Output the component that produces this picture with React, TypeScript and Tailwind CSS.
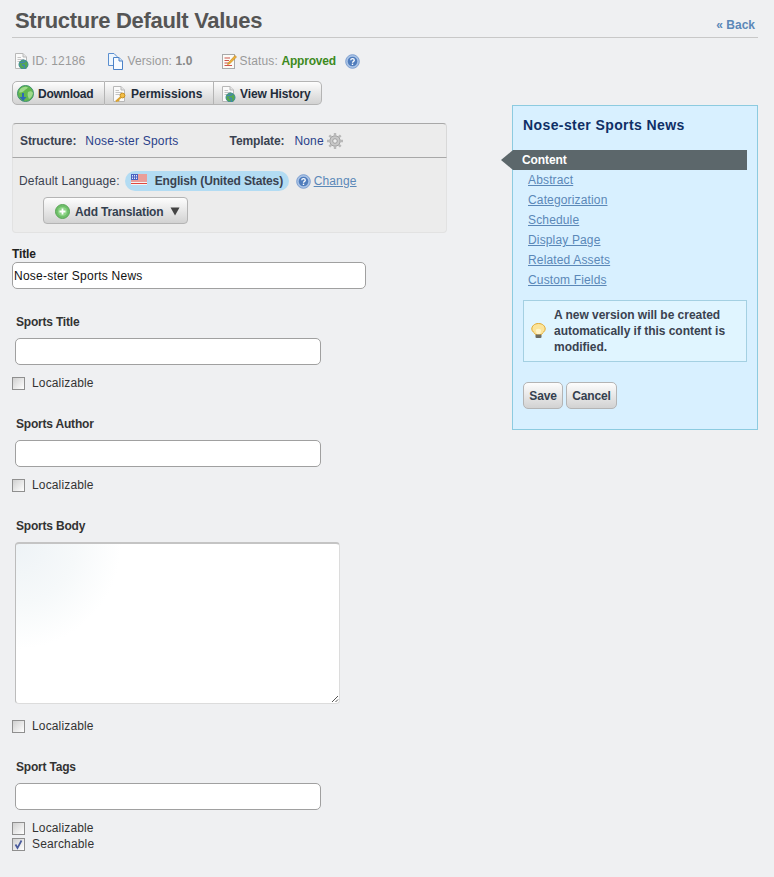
import React from "react";

const Doc = ({ globe = false, keyIcon = false }: { globe?: boolean; keyIcon?: boolean }) => (
  <svg width="16" height="16" viewBox="0 0 16 16" className="shrink-0">
    <path d="M2.500 .5H10L13.500 4V15.500H2.500Z" fill="#fafafa" stroke="#b8b8b8" />
    <path d="M10 .5V4H13.500" fill="#e4e4e4" stroke="#b8b8b8" />
    <path d="M4.500 4.500H8M4.500 6.500H11M4.500 8.500H9" stroke="#c4c4c4" />
    {globe && (
      <>
        <circle cx="10.500" cy="11.500" r="4.500" fill="#55a850" stroke="#3a8a98" />
        <path d="M7.500 10C9.500 8.500 11 9.500 12.500 8.500M9 12C11 11.500 12.500 12.500 11 15.500" stroke="#3f7fc4" strokeWidth="1.300" fill="none" />
      </>
    )}
    {keyIcon && (
      <>
        <circle cx="11.500" cy="9.500" r="2.400" fill="#f2bd45" stroke="#c78f22" />
        <path d="M10 11L5 15.500M6.500 13.500L8 15" stroke="#dba32f" strokeWidth="2" fill="none" />
      </>
    )}
  </svg>
);

const Copies = () => (
  <svg width="17" height="17" viewBox="0 0 17 17" className="shrink-0">
    <path d="M1.500 .5H7L10 3.500V12.500H1.500Z" fill="#eef6fd" stroke="#5b8fd0" />
    <path d="M6.500 4.500H12L15.500 8V16.500H6.500Z" fill="#f7fbff" stroke="#4b82c8" />
    <path d="M12 4.500V8H15.500" fill="#cfe2f6" stroke="#4b82c8" />
  </svg>
);

const StatusIcon = () => (
  <svg width="16" height="16" viewBox="0 0 16 16" className="shrink-0">
    <rect x="1.500" y="1.500" width="12" height="14" fill="#fbfbf7" stroke="#a9a9a9" />
    <path d="M3.500 5H9M3.500 7.500H8M3.500 10H7M3.500 12.500H11" stroke="#d0554a" strokeWidth="1.100" />
    <path d="M7 10L14 2.500L15.500 4L8.500 11L6.500 11.500Z" fill="#f0b035" stroke="#b97f1f" strokeWidth=".6" />
  </svg>
);

const Help = () => (
  <svg width="15" height="15" viewBox="0 0 15 15" className="shrink-0">
    <circle cx="7.500" cy="7.500" r="6.800" fill="#a9c3e6" stroke="#7d9fd0" />
    <circle cx="7.500" cy="7.500" r="4.800" fill="#4f7cbc" />
    <path d="M5.700 6.200C5.800 4.200 9.300 4.200 9.300 6.200C9.300 7.400 7.500 7.300 7.500 8.700" stroke="#fff" strokeWidth="1.300" fill="none" />
    <rect x="6.800" y="9.600" width="1.400" height="1.400" fill="#fff" />
  </svg>
);

const GlobeDown = () => (
  <svg width="17" height="17" viewBox="0 0 17 17" className="shrink-0">
    <circle cx="8.500" cy="8.500" r="8" fill="#62b84e" stroke="#3e8f6f" />
    <path d="M3 4.500C5 2 9 1 11 2.500C10 4.500 8 4 7 6C5.500 7 4 7.500 2 7.500ZM11 7C13 5.500 15 6 16 8C15.500 11 14 13 12 14C11.500 12 10 11 11 7Z" fill="#9fd98b" />
    <path d="M5 8V12H2.500L6 16L9.500 12H7V8Z" fill="#2f68b8" />
  </svg>
);

const Gear = () => (
  <svg width="16" height="16" viewBox="0 0 16 16" className="shrink-0">
    <circle cx="8" cy="8" r="5.200" fill="#c8c8c8" stroke="#a0a0a0" />
    <g stroke="#b8b8b8" strokeWidth="2.400">
      <path d="M8 0V3M8 13V16M0 8H3M13 8H16M2.300 2.300L4.400 4.400M11.600 11.600L13.700 13.700M13.700 2.300L11.600 4.400M4.400 11.600L2.300 13.700" />
    </g>
    <circle cx="8" cy="8" r="2.300" fill="#ececec" stroke="#a0a0a0" />
  </svg>
);

const Flag = () => (
  <svg width="16" height="11" viewBox="0 0 16 11" className="shrink-0">
    <rect width="16" height="11" fill="#f4f4f4" />
    <path d="M0 1H16M0 3H16M0 5H16M0 7H16M0 9.500H16" stroke="#e0493f" strokeWidth="1.100" />
    <rect width="7" height="6" fill="#4a62c0" />
    <path d="M1 1.500H6M1 3H6M1 4.500H6" stroke="#dfe6fb" strokeDasharray="1 1" />
  </svg>
);

const PlusCircle = () => (
  <svg width="15" height="15" viewBox="0 0 15 15" className="shrink-0">
    <circle cx="7.500" cy="7.500" r="7" fill="#6fc06a" stroke="#5aa456" />
    <circle cx="7.500" cy="7.500" r="4.600" fill="#8ed487" />
    <path d="M7.500 4.500V10.500M4.500 7.500H10.500" stroke="#fff" strokeWidth="1.800" />
  </svg>
);

const Bulb = () => (
  <svg width="15" height="16" viewBox="0 0 15 16" className="shrink-0">
    <path d="M7.500 .5C3.500 .5 .8 3 .8 6C.8 8.500 3.500 9.500 4.500 11.500H10.500C11.500 9.500 14.200 8.500 14.200 6C14.200 3 11.500 .5 7.500 .5Z" fill="#fbe49a" stroke="#e3a92f" />
    <path d="M4.800 8C4 5 10.500 5 10 8L9 11.500H6Z" fill="#fff4c9" />
    <rect x="4.500" y="11.500" width="6" height="3.500" rx="1" fill="#6c6c62" />
  </svg>
);

const Check = ({ checked = false, label }: { checked?: boolean; label: string }) => (
  <label className="flex items-center h-[16px] text-[12px] text-[#333]">
    <span className="w-[13px] h-[13px] border border-[#8f8f8f] bg-gradient-to-br from-[#d0d0d0] to-white flex items-center justify-center">
      {checked && (
        <svg width="11" height="11" viewBox="0 0 11 11">
          <path d="M2.500 5.500L4.500 9L8.500 1.500" stroke="#4a5b9c" strokeWidth="1.700" fill="none" />
        </svg>
      )}
    </span>
    <span className="ml-[7px]">{label}</span>
  </label>
);

const btn = "bg-gradient-to-b from-[#fdfdfd] to-[#d2d2d2] border border-[#b4b4b4] font-bold text-[12px] tracking-[-0.15px] text-[#34404f]";

const Field = ({ label, mt }: { label: string; mt: string }) => (
  <div className={mt}>
    <div className="ml-[4px] h-[16px] leading-[16px] font-bold text-[12px] tracking-[-0.2px] text-[#333]">{label}</div>
    <div className="ml-[3px] mt-[8px] w-[306px] h-[27px] bg-white border border-[#a0a0a0] rounded-[5px]" />
  </div>
);

export default function App() {
  return (
    <div
      className="min-h-[877px] bg-[#eff0f2] pl-[12px] pr-[16px] text-[12px] tracking-[0.15px] text-[#333]"
      style={{ fontFamily: '"Liberation Sans", Arial, sans-serif' }}
    >
      <header className="flex items-start justify-between h-[38px] border-b border-[#c8c8c8]">
        <h1 className="ml-[3px] mt-[8px] text-[22px] font-bold tracking-[-0.3px] text-[#555555] leading-[26px]">Structure Default Values</h1>
        <a className="mt-[17px] mr-[3px] font-bold text-[12px] leading-[16px] tracking-[0px] text-[#5b88b8]">« Back</a>
      </header>

      <div className="flex items-start">
        <main className="w-[435px]">
          <div className="flex items-center h-[22px] mt-[12px] text-[#9a9a9a]">
            <span className="ml-[1px]"><Doc globe /></span>
            <span className="ml-[3px]">ID: 12186</span>
            <span className="ml-[22px]"><Copies /></span>
            <span className="ml-[3px]">Version: <b className="text-[#888]">1.0</b></span>
            <span className="ml-[28px]"><StatusIcon /></span>
            <span className="ml-[3px]">Status: <b className="tracking-[-0.2px] text-[#3d8a1e]">Approved</b></span>
            <span className="ml-[9px] mt-[1px]"><Help /></span>
          </div>

          <div className="flex h-[24px] mt-[9px]">
            <button className={`${btn} w-[93px] rounded-l-[5px] flex items-center pl-[4px] pt-[1px]`}>
              <GlobeDown /><span className="ml-[4px] tracking-[-0.25px] text-[#222c3a]">Download</span>
            </button>
            <button className={`${btn} w-[109px] border-l-0 flex items-center pl-[6px] pt-[1px]`}>
              <Doc keyIcon /><span className="ml-[4px] tracking-[0px] text-[#222c3a]">Permissions</span>
            </button>
            <button className={`${btn} w-[108px] border-l-0 rounded-r-[5px] flex items-center pl-[6px] pt-[1px]`}>
              <Doc globe /><span className="ml-[4px] tracking-[-0.1px] text-[#222c3a]">View History</span>
            </button>
          </div>

          <div className="mt-[18px] h-[35px] flex items-center bg-[#ececec] border border-[#d8d8d8] border-t-[#a8a8a8] border-b-[#a8a8a8] rounded-t-[4px] pl-[7px]">
            <b className="tracking-[-0.1px] text-[#3a4250]">Structure:</b>
            <span className="ml-[9px] tracking-[0.2px] text-[#2a3f8a]">Nose-ster Sports</span>
            <b className="ml-[51px] tracking-[-0.1px] text-[#3a4250]">Template:</b>
            <span className="ml-[10px] text-[#2a3f8a]">None</span>
            <span className="ml-[3px]"><Gear /></span>
          </div>

          <div className="h-[75px] bg-[#ececec] border border-t-0 border-[#e2e2e2] rounded-b-[4px] pl-[6px] pt-[13px]">
            <div className="flex items-center h-[20px]">
              <span className="font-normal text-[#3a4250]">Default Language:</span>
              <span className="ml-[5px] w-[164px] h-[20px] bg-[#b3dcf3] rounded-[10px] flex items-center pl-[6px]">
                <span className="-mt-[3px]"><Flag /></span>
                <b className="ml-[8px] tracking-[-0.13px] text-[#3a4250]">English (United States)</b>
              </span>
              <span className="ml-[7px] mt-[1px]"><Help /></span>
              <a className="ml-[3px] underline text-[#5b88b8]">Change</a>
            </div>
            <button className={`${btn} mt-[6px] ml-[24px] w-[145px] h-[27px] rounded-[4px] flex items-center pl-[11px] pt-[2px] text-[#3a4250]`}>
              <PlusCircle />
              <span className="ml-[5px] tracking-[-0.15px]">Add Translation</span>
              <svg width="10" height="9" viewBox="0 0 10 9" className="ml-[7px]"><path d="M.5 .5H9.500L5 8.500Z" fill="#444" /></svg>
            </button>
          </div>

          <div className="mt-[13px] h-[16px] leading-[16px] font-bold tracking-[-0.15px] text-[#222]">Title</div>
          <div className="w-[354px] h-[27px] bg-white border border-[#a0a0a0] rounded-[5px] flex items-center pl-[1px] text-[12px] tracking-[0.25px] text-[#111]">
            Nose-ster Sports News
          </div>

          <Field label="Sports Title" mt="mt-[25px]" />
          <div className="mt-[10px]"><Check label="Localizable" /></div>

          <Field label="Sports Author" mt="mt-[25px]" />
          <div className="mt-[10px]"><Check label="Localizable" /></div>

          <div className="mt-[25px]">
            <div className="ml-[4px] h-[16px] leading-[16px] font-bold tracking-[-0.2px] text-[#333]">Sports Body</div>
            <div className="relative ml-[3px] mt-[8px] w-[325px] h-[162px] border border-[#dcdcdc] border-t-[2px] border-t-[#c4c4c4] border-l-[#bcbcbc] rounded-[4px] bg-white bg-[radial-gradient(circle_at_top_left,#eef3f6_0,#f6f9fa_60px,#ffffff_105px)] overflow-hidden">
              <svg width="8" height="8" viewBox="0 0 8 8" className="absolute right-0 bottom-0">
                <path d="M1 7L7 1M4.500 7L7 4.500" stroke="#555" />
              </svg>
            </div>
          </div>
          <div className="mt-[14px]"><Check label="Localizable" /></div>

          <Field label="Sport Tags" mt="mt-[25px]" />
          <div className="mt-[10px]"><Check label="Localizable" /></div>
          <Check checked label="Searchable" />
        </main>

        <aside className="ml-auto mt-[67px] w-[246px] h-[325px] bg-[#d8f0ff] border border-[#8ccbe0]">
          <h2 className="mt-[11px] ml-[10px] h-[16px] leading-[16px] text-[14px] font-bold tracking-[0.4px] text-[#0f2f66]">Nose-ster Sports News</h2>
          <div className="flex mt-[17px] h-[20px] -ml-[12px]">
            <svg width="12" height="20" viewBox="0 0 12 20"><path d="M12 0V20L0 10Z" fill="#5c676b" /></svg>
            <div className="w-[234px] bg-[#5c676b] text-white font-bold tracking-[-0.1px] pl-[9px] leading-[20px]">Content</div>
          </div>
          <nav className="flex flex-col ml-[15px] text-[#5b88b8]">
            {["Abstract", "Categorization", "Schedule", "Display Page", "Related Assets", "Custom Fields"].map((t) => (
              <a key={t} className="h-[20px] leading-[20px] underline">{t}</a>
            ))}
          </nav>
          <div className="mt-[10px] ml-[10px] w-[224px] h-[62px] border border-[#a4d0e2] bg-[#e0f5ff] flex items-center pl-[7px]">
            <Bulb />
            <p className="ml-[8px] w-[180px] font-bold text-[12px] leading-[16px] tracking-[-0.03px] text-[#3a4250]">
              A new version will be created automatically if this content is modified.
            </p>
          </div>
          <div className="flex mt-[20px] ml-[10px] gap-[3px]">
            <button className={`${btn} w-[40px] h-[27px] rounded-[5px]`}>Save</button>
            <button className={`${btn} w-[51px] h-[27px] rounded-[5px]`}>Cancel</button>
          </div>
        </aside>
      </div>
    </div>
  );
}
